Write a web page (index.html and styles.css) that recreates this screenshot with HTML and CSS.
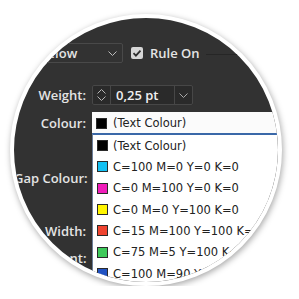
FILE: index.html
```html
<!DOCTYPE html>
<html lang="en">
<head>
    <meta charset="UTF-8">
    <meta name="viewport" content="width=device-width, initial-scale=1.0">
    <title>Paragraph Rules</title>
    <link rel="stylesheet" href="styles.css">
</head>
<body>
    <!-- Magnified dialog, cropped to a circle -->
    <div class="lens">
        <div class="dialog">
            <!-- Rule type + Rule On -->
            <div class="rule-row">
                <div class="select rule-type">
                    <span>Rule Below</span>
                    <svg width="9" height="5" viewBox="0 0 9 5"><path d="M.5.5l4 4 4-4" fill="none" stroke="#bdbdbd"/></svg>
                </div>
                <span class="checkbox">
                    <svg width="12" height="12" viewBox="0 0 12 12"><path d="M2.5 6.2l2.4 2.4 4.6-5" fill="none" stroke="#2e2e2e" stroke-width="1.8"/></svg>
                </span>
                <span class="rule-on">Rule On</span>
                <span class="rule-line"></span>
            </div>

            <!-- Weight -->
            <div class="field weight-row">
                <label>Weight:</label>
                <div class="combo">
                    <span class="spin">
                        <svg width="17" height="18" viewBox="0 0 17 18"><path d="M4.5 7.5l4-4 4 4M4.5 10.5l4 4 4-4" fill="none" stroke="#b5b5b5"/></svg>
                    </span>
                    <span class="combo-value">0,25 pt</span>
                    <span class="combo-btn">
                        <svg width="9" height="5" viewBox="0 0 9 5"><path d="M.5.5l4 4 4-4" fill="none" stroke="#a8a8a8"/></svg>
                    </span>
                </div>
            </div>

            <!-- Colour with open swatch list -->
            <div class="field colour-row">
                <label>Colour:</label>
                <div class="swatch-select">
                    <span class="swatch" style="background: #000;"></span>
                    <span>(Text Colour)</span>

                    <ul class="swatch-list">
                        <li><span class="swatch" style="background: #000;"></span>(Text Colour)</li>
                        <li><span class="swatch" style="background: #13c0f2;"></span>C=100 M=0 Y=0 K=0</li>
                        <li><span class="swatch" style="background: #f01dba;"></span>C=0 M=100 Y=0 K=0</li>
                        <li><span class="swatch" style="background: #fff500;"></span>C=0 M=0 Y=100 K=0</li>
                        <li><span class="swatch" style="background: #ef4430;"></span>C=15 M=100 Y=100 K=0</li>
                        <li><span class="swatch" style="background: #3ec95a;"></span>C=75 M=5 Y=100 K=0</li>
                        <li><span class="swatch" style="background: #2152c2;"></span>C=100 M=90 Y=10 K=0</li>
                    </ul>
                </div>
            </div>

            <div class="field gap-row"><label>Gap Colour:</label></div>
            <div class="field width-row"><label>Width:</label></div>
            <div class="field indent-row"><label>Left Indent:</label></div>
        </div>
    </div>
</body>
</html>
```

FILE: styles.css
```css
/* General Styles */
body {
    margin: 0;
    padding: 0;
    background-color: #fff;
    font-family: 'Open Sans', 'DejaVu Sans', sans-serif;
}

/* Circular crop */
.lens {
    width: 264px;
    height: 264px;
    margin: 14px 0 0 10px;
    border: 4px solid #fff;
    border-radius: 50%;
    overflow: hidden;
    background-color: #323232;
    box-shadow: 1px 2px 6px rgba(0, 0, 0, 0.35);
}

.dialog {
    padding-top: 25px;
    color: #e4e4e4;
    font-size: 13px;
    font-weight: 600;
}

/* Rule row */
.rule-row {
    display: flex;
    align-items: center;
    height: 20px;
}

.select {
    display: flex;
    align-items: center;
    justify-content: space-between;
    box-sizing: border-box;
    height: 20px;
    border: 1px solid #494949;
    border-radius: 2px;
}

.rule-type {
    margin-left: -30px;
    width: 139px;
    padding: 0 5px 0 23px;
}

.checkbox {
    display: flex;
    width: 12px;
    height: 12px;
    margin-left: 8px;
    background-color: #d6d6d6;
    border-radius: 2px;
}

.rule-on {
    margin-left: 7px;
}

.rule-line {
    flex: 1;
    height: 1px;
    margin: 2px 0 0 6px;
    background-color: #262626;
}

/* Label + control rows */
.field {
    display: grid;
    grid-template-columns: 72px 1fr;
    column-gap: 6px;
    align-items: center;
}

.field label {
    text-align: right;
    white-space: nowrap;
    line-height: 18px;
}

.weight-row {
    margin-top: 22px;
}

.combo {
    display: flex;
    box-sizing: border-box;
    width: 101px;
    height: 20px;
    border: 1px solid #474747;
    border-radius: 2px;
    background-color: #2a2a2a;
}

.spin {
    display: flex;
    width: 17px;
    border-right: 1px solid #474747;
}

.combo-value {
    flex: 1;
    padding-left: 5px;
    line-height: 18px;
    color: #f0f0f0;
}

.combo-btn {
    display: flex;
    align-items: center;
    justify-content: center;
    width: 17px;
    border-left: 1px solid #474747;
}

/* Colour dropdown */
.colour-row {
    margin-top: 7px;
    position: relative;
    z-index: 2;
}

.swatch-select {
    position: relative;
    display: flex;
    align-items: center;
    gap: 6px;
    box-sizing: border-box;
    width: 240px;
    height: 22px;
    padding-left: 4px;
    background-color: #fbfbfb;
    color: #222;
    font-family: 'DejaVu Sans', sans-serif;
    font-size: 11.5px;
    font-weight: normal;
}

.swatch {
    display: inline-block;
    flex: none;
    box-sizing: border-box;
    width: 11px;
    height: 11px;
    border: 1px solid #2a2a2a;
}

.swatch-list {
    position: absolute;
    top: 21px;
    left: 0;
    width: 240px;
    margin: 0;
    padding: 0;
    list-style: none;
    background-color: #fff;
    border: 1px solid #6d7f99;
    border-top: 2px solid #3a68a8;
}

.swatch-list li {
    display: flex;
    align-items: center;
    gap: 5px;
    height: 21.33px;
    padding-left: 4px;
    white-space: nowrap;
}

.gap-row {
    margin-top: 35px;
}

.width-row {
    margin-top: 35px;
}

.indent-row {
    margin-top: 9px;
}
```
